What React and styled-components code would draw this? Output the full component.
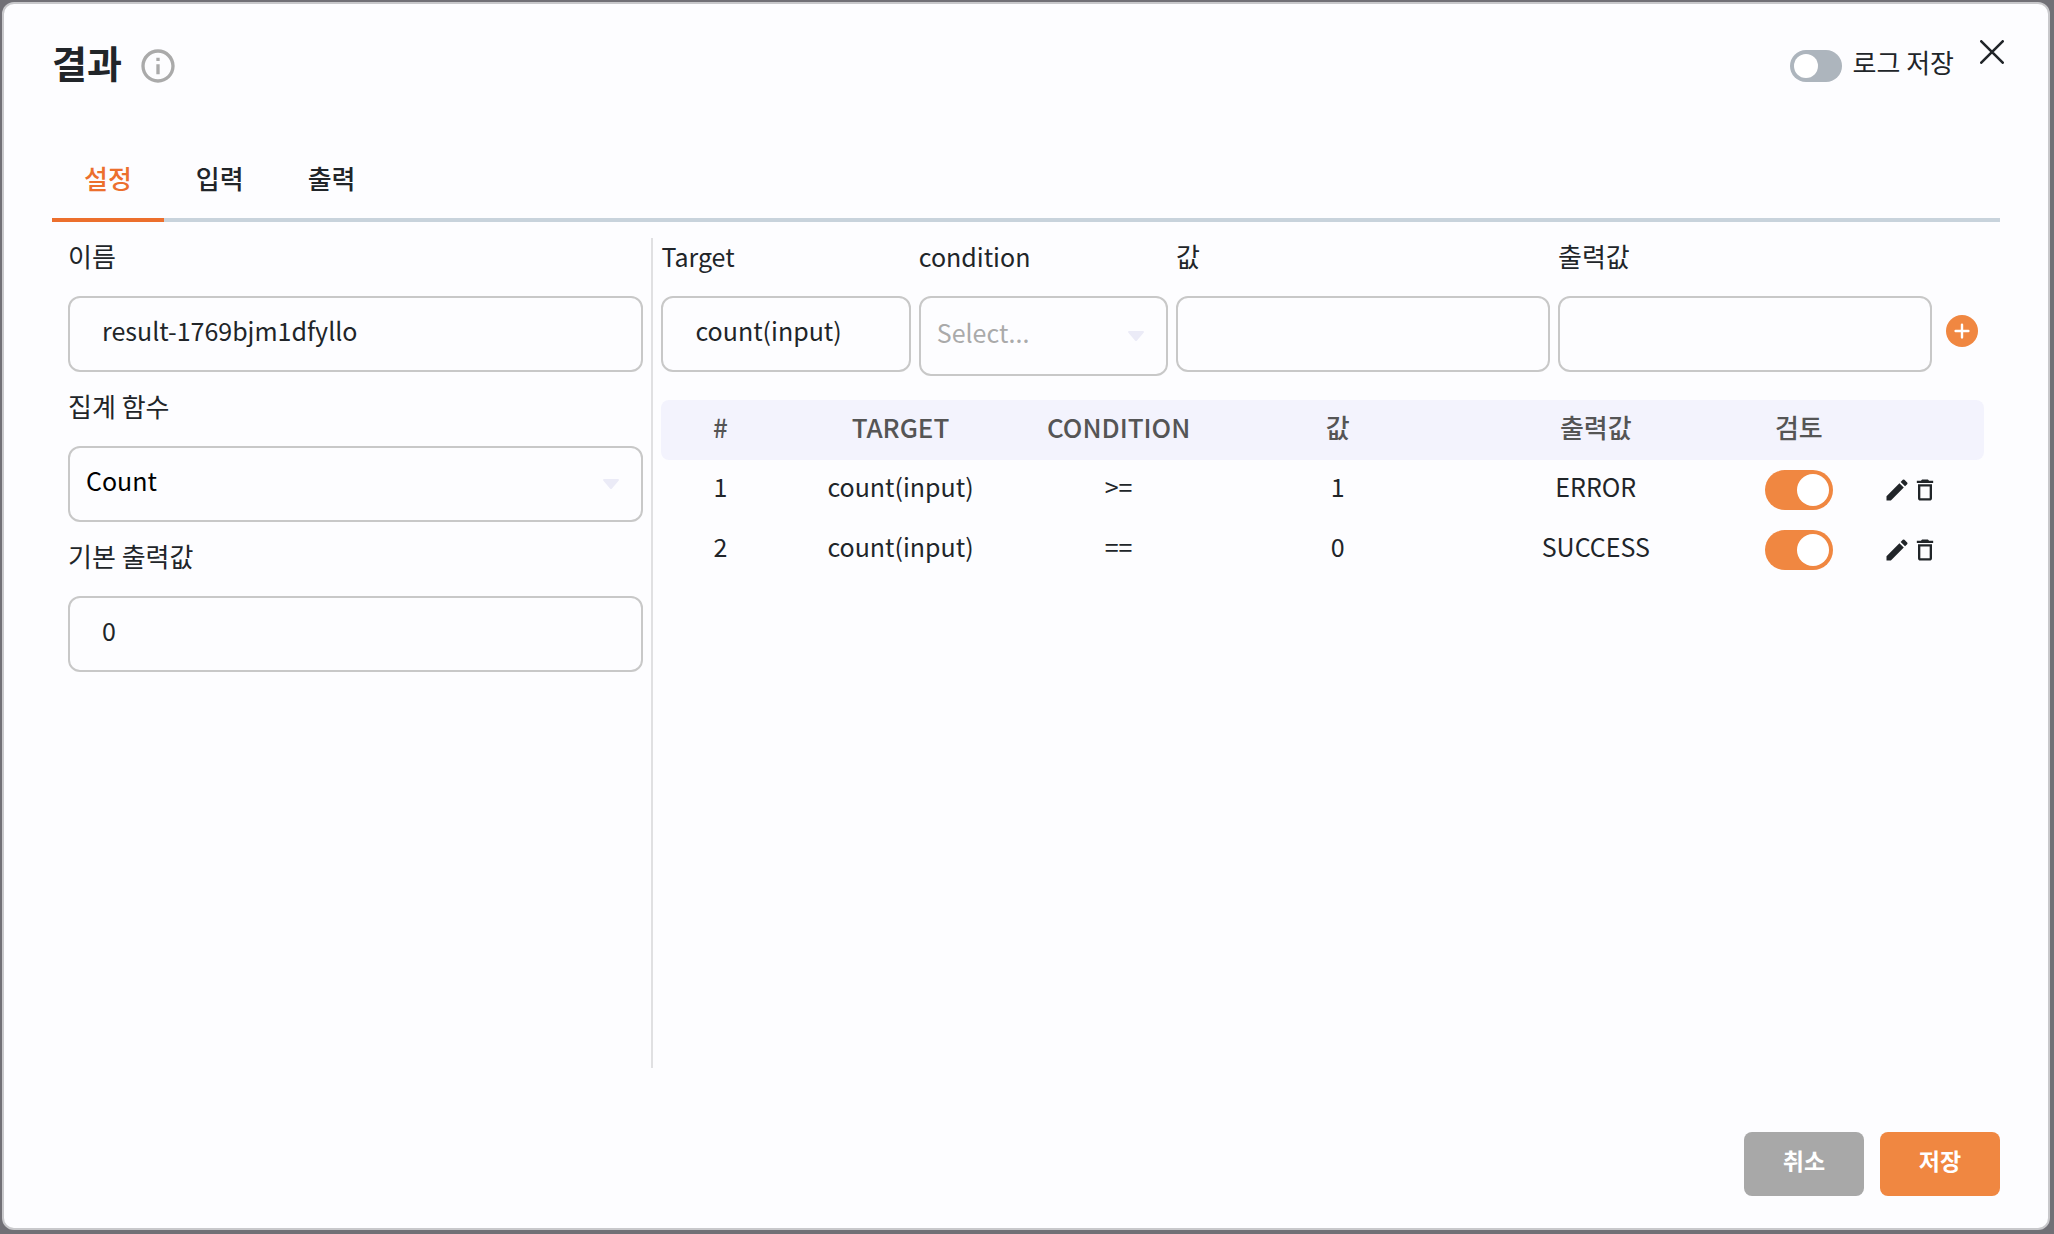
import React, { useState } from 'react'
import styled, { createGlobalStyle } from 'styled-components';
import { MdInfoOutline, MdEdit, MdDeleteOutline } from 'react-icons/md';

const initialRules = [
	{ id: 1, target: 'count(input)', condition: '>=', value: '1', output: 'ERROR', review: true },
	{ id: 2, target: 'count(input)', condition: '==', value: '0', output: 'SUCCESS', review: true },
];

const tabs = ['설정', '입력', '출력'];

const App = () => {

	const [ activeTab, setActiveTab ] = useState('설정');
	const [ saveLog, setSaveLog ] = useState(false);
	const [ rules, setRules ] = useState(initialRules);
	const [ condition, setCondition ] = useState('');

	const toggleReview = (id) => {
		setRules(rules.map(rule => rule.id === id ? { ...rule, review: !rule.review } : rule));
	}

	const removeRule = (id) => {
		setRules(rules.filter(rule => rule.id !== id));
	}

	return (
		<>
			<GlobalStyle />
			<Modal role="dialog" aria-labelledby="modal-title">
				<Header>
					<Title id="modal-title">결과</Title>
					<InfoIcon />
					<HeaderRight>
						<LogLabel>
							<Switch checked={saveLog} onChange={() => setSaveLog(!saveLog)} />
							<LogText>로그 저장</LogText>
						</LogLabel>
						<CloseButton type="button" aria-label="닫기">
							<svg width="24" height="24" viewBox="0 0 24 24" fill="none" stroke="currentColor" strokeWidth="2.6" strokeLinecap="round">
								<path d="M1.3 1.3l21.4 21.4M22.7 1.3L1.3 22.7" />
							</svg>
						</CloseButton>
					</HeaderRight>
				</Header>

				<TabBar role="tablist">
					{tabs.map(tab => (
						<Tab
							key={tab}
							type="button"
							role="tab"
							aria-selected={tab === activeTab}
							$active={tab === activeTab}
							onClick={() => setActiveTab(tab)}
						>
							{tab}
						</Tab>
					))}
				</TabBar>

				<Body>
					{/* Settings */}
					<SettingsPanel>
						<Field>
							<Label htmlFor="name">이름</Label>
							<Input id="name" defaultValue="result-1769bjm1dfyllo" />
						</Field>
						<Field>
							<Label htmlFor="aggregate">집계 함수</Label>
							<SelectBox>
								<Select id="aggregate" defaultValue="Count">
									<option>Count</option>
									<option>Sum</option>
									<option>Average</option>
								</Select>
								<Arrow />
							</SelectBox>
						</Field>
						<Field>
							<Label htmlFor="defaultOutput">기본 출력값</Label>
							<Input id="defaultOutput" defaultValue="0" />
						</Field>
					</SettingsPanel>

					{/* Rules */}
					<RulesPanel>
						<RuleForm>
							<Field>
								<Label htmlFor="target" $latin>Target</Label>
								<Input id="target" defaultValue="count(input)" />
							</Field>
							<Field>
								<Label htmlFor="condition" $latin>condition</Label>
								<SelectBox>
									<Select
										id="condition"
										$tall
										$empty={!condition}
										value={condition}
										onChange={e => setCondition(e.target.value)}
									>
										<option value="">Select...</option>
										<option>&gt;=</option>
										<option>==</option>
										<option>&lt;=</option>
									</Select>
									<Arrow />
								</SelectBox>
							</Field>
							<Field>
								<Label htmlFor="value">값</Label>
								<Input id="value" />
							</Field>
							<Field>
								<Label htmlFor="output">출력값</Label>
								<Input id="output" />
							</Field>
							<AddButton type="button" aria-label="추가">
								<svg width="16" height="16" viewBox="0 0 16 16" fill="none" stroke="currentColor" strokeWidth="2.4" strokeLinecap="round">
									<path d="M8 1.6v12.8M1.6 8h12.8" />
								</svg>
							</AddButton>
						</RuleForm>

						<RuleTable>
							<colgroup>
								<Col $width={59} />
								<Col $width={121} />
								<Col $width={97} />
								<Col $width={122} />
								<Col $width={136} />
								<Col $width={67} />
								<Col $width={59} />
							</colgroup>
							<thead>
								<tr>
									<HeadCell>#</HeadCell>
									<HeadCell>TARGET</HeadCell>
									<HeadCell>CONDITION</HeadCell>
									<HeadCell>값</HeadCell>
									<HeadCell>출력값</HeadCell>
									<HeadCell>검토</HeadCell>
									<HeadCell />
								</tr>
							</thead>
							<tbody>
								{rules.map(rule => (
									<tr key={rule.id}>
										<TextCell>{rule.id}</TextCell>
										<TextCell>{rule.target}</TextCell>
										<TextCell>{rule.condition}</TextCell>
										<TextCell>{rule.value}</TextCell>
										<TextCell>{rule.output}</TextCell>
										<Cell>
											<Switch
												$large
												aria-label="검토"
												checked={rule.review}
												onChange={() => toggleReview(rule.id)}
											/>
										</Cell>
										<Cell>
											<Actions>
												<IconButton type="button" aria-label="수정"><MdEdit /></IconButton>
												<IconButton type="button" aria-label="삭제" onClick={() => removeRule(rule.id)}>
													<MdDeleteOutline />
												</IconButton>
											</Actions>
										</Cell>
									</tr>
								))}
							</tbody>
						</RuleTable>
					</RulesPanel>
				</Body>

				<Footer>
					<FooterButton type="button" $color="#a8a8a8">취소</FooterButton>
					<FooterButton type="button" $color="#f08741">저장</FooterButton>
				</Footer>
			</Modal>
		</>
	)
}

const Arrow = () => (
	<ArrowIcon width="16" height="10" viewBox="0 0 16 10">
		<path d="M1.2 0h13.6c1 0 1.5 1 .8 1.8L9 9.4c-.6.7-1.4.7-2 0L.4 1.8C-.3 1 .2 0 1.2 0z" fill="#ebebf7" />
	</ArrowIcon>
)

const GlobalStyle = createGlobalStyle`
	* {
		box-sizing: border-box;
	}

	body {
		margin: 0;
		background-color: #717076;
	}

	body, button, input, select {
		font-family: 'Noto Sans CJK KR', sans-serif;
		font-size: 26px;
		color: #212529;
	}
`;

const Modal = styled.div`
	display: flex;
	flex-direction: column;
	min-height: calc(100vh - 6px);
	margin: 2px 4px 4px 2px;
	padding: 0 48px 32px;
	border: 2px solid #c8c8cb;
	border-radius: 12px;
	background-color: #fdfdff;
`;

const Header = styled.header`
	display: flex;
	align-items: center;
	height: 124px;
`;

const Title = styled.h1`
	margin: 0 16px 0 0;
	padding-bottom: 8px;
	font-size: 38px;
	font-weight: 700;
	line-height: 48px;
`;

const InfoIcon = styled(MdInfoOutline)`
	font-size: 40px;
	color: #aaa;
`;

const HeaderRight = styled.div`
	display: flex;
	align-items: center;
	margin-left: auto;
	margin-right: -4px;
`;

const LogLabel = styled.label`
	display: flex;
	align-items: center;
	gap: 10px;
`;

const LogText = styled.span`
	padding-bottom: 8px;
	line-height: 40px;
`;

const CloseButton = styled.button`
	display: flex;
	margin: 0 0 28px 26px;
	padding: 0;
	border: none;
	background: none;
	cursor: pointer;
`;

const Switch = styled.input.attrs({ type: 'checkbox', role: 'switch' })`
	appearance: none;
	display: flex;
	flex-shrink: 0;
	width: ${({ $large }) => $large ? 68 : 52}px;
	height: ${({ $large }) => $large ? 40 : 32}px;
	margin: 0 auto;
	padding: 4px;
	border-radius: 20px;
	background-color: #adb5bd;
	cursor: pointer;

	&::before {
		content: '';
		height: 100%;
		aspect-ratio: 1;
		border-radius: 50%;
		background-color: #fff;
	}

	&:checked {
		justify-content: flex-end;
		background-color: #f08741;
	}
`;

const TabBar = styled.div`
	display: flex;
	height: 94px;
	border-bottom: 4px solid #c8d3dc;
`;

const Tab = styled.button`
	height: 94px;
	padding: 8px 32px 0;
	border: none;
	border-bottom: 4px solid ${({ $active }) => $active ? '#ec6f2d' : 'transparent'};
	background: none;
	font-weight: 500;
	color: ${({ $active }) => $active ? '#ec6f2d' : '#212529'};
	cursor: pointer;
`;

const Body = styled.div`
	display: grid;
	flex: 1;
	grid-template-columns: 44fr 100fr;
	margin: 16px 16px 64px;
`;

const SettingsPanel = styled.section`
	display: flex;
	flex-direction: column;
	gap: 16px;
	padding-right: 8px;
	border-right: 2px solid #e0e0e2;
`;

const RulesPanel = styled.section`
	padding-left: 8px;
`;

const Field = styled.div`
	min-width: 0;
`;

const Label = styled.label`
	display: block;
	height: 58px;
	font-size: ${({ $latin }) => $latin ? 25 : 26}px;
	line-height: 36px;
`;

const Input = styled.input`
	display: block;
	width: 100%;
	height: 76px;
	padding: 0 32px 8px;
	border: 2px solid #c8c8c8;
	border-radius: 12px;
	background-color: transparent;
	font-size: 25px;

	&:focus {
		outline: none;
		border-color: #f08741;
	}
`;

const SelectBox = styled.div`
	display: grid;
	position: relative;
	align-items: center;
`;

const Select = styled.select`
	appearance: none;
	width: 100%;
	height: ${({ $tall }) => $tall ? 80 : 76}px;
	padding: 0 16px 8px;
	border: 2px solid #c8c8c8;
	border-radius: 12px;
	background-color: transparent;
	font-size: 25px;
	color: ${({ $empty }) => $empty ? '#aaa' : '#000'};
`;

const ArrowIcon = styled.svg`
	position: absolute;
	right: 24px;
	pointer-events: none;
`;

const RuleForm = styled.div`
	display: grid;
	grid-template-columns: 2fr 2fr 3fr 3fr 44px;
	gap: 8px;
	margin-bottom: 24px;
`;

const AddButton = styled.button`
	display: flex;
	align-items: center;
	justify-content: center;
	justify-self: center;
	width: 32px;
	height: 32px;
	margin-top: 77px;
	padding: 0;
	border: none;
	border-radius: 50%;
	background-color: #f08741;
	color: #fff;
	cursor: pointer;
`;

const RuleTable = styled.table`
	width: 100%;
	table-layout: fixed;
	border-spacing: 0;
	text-align: center;
`;

/* widths are shares of the table, the fixed layout scales them up */
const Col = styled.col`
	width: ${({ $width }) => $width}px;
`;

const HeadCell = styled.th`
	height: 60px;
	padding: 0 0 8px;
	background-color: #f3f3fd;
	font-weight: 500;
	color: #555;

	&:first-child {
		border-radius: 8px 0 0 8px;
	}

	&:last-child {
		border-radius: 0 8px 8px 0;
	}
`;

const Cell = styled.td`
	height: 60px;
	padding: 0;
`;

const TextCell = styled(Cell)`
	padding-bottom: 8px;
	font-size: 25px;
`;

const Actions = styled.div`
	display: flex;
	justify-content: center;
	padding-right: 28px;
`;

const IconButton = styled.button`
	display: flex;
	padding: 0;
	border: none;
	background: none;
	font-size: 28px;
	cursor: pointer;
`;

const Footer = styled.footer`
	display: flex;
	justify-content: flex-end;
	gap: 16px;
`;

const FooterButton = styled.button`
	width: 120px;
	height: 64px;
	padding: 0 0 8px;
	border: none;
	border-radius: 8px;
	background-color: ${({ $color }) => $color};
	font-size: 23px;
	font-weight: 700;
	color: #fff;
	cursor: pointer;
`;

export default App;
